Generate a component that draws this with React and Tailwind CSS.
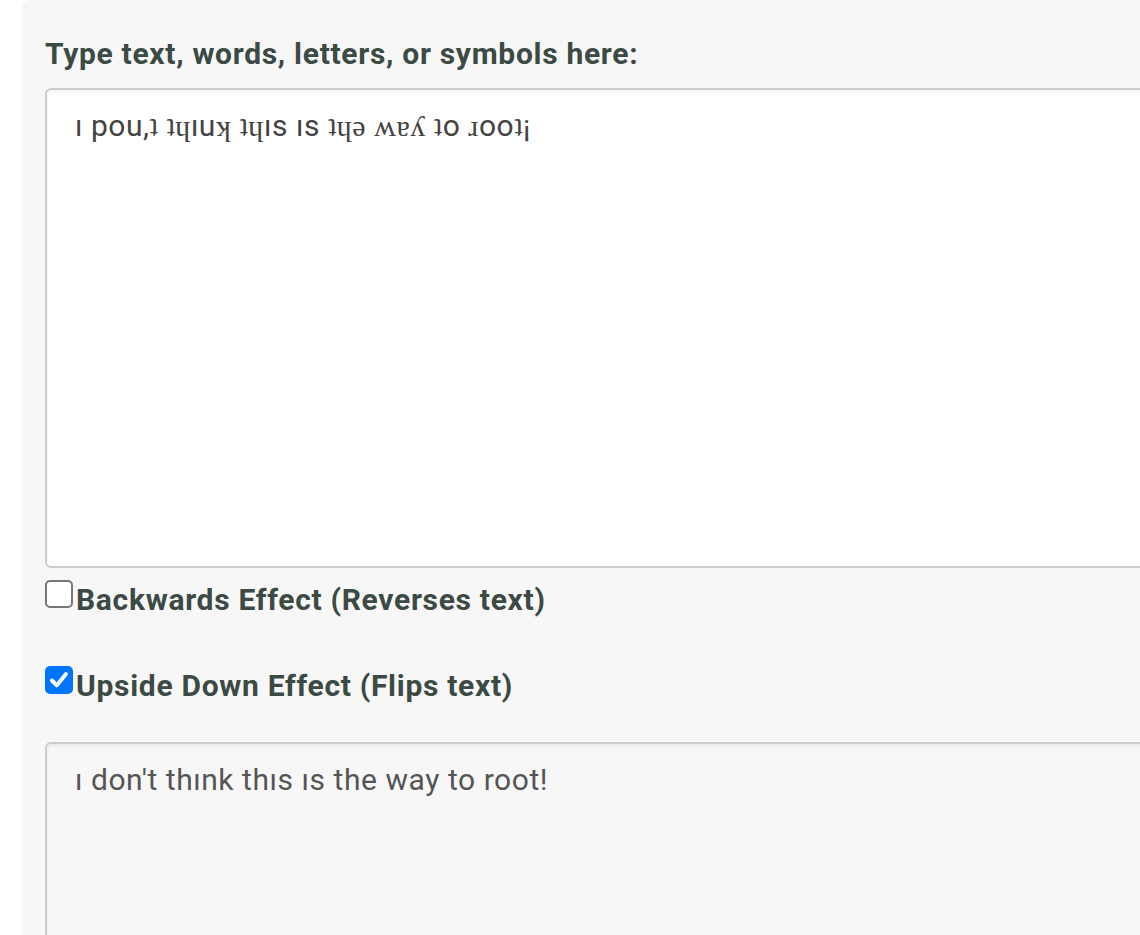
import React, { useState } from 'react';

const flip = {
  'ı': 'ı', p: 'd', o: 'o', u: 'n', ',': "'", 'ʇ': 't', 'ɥ': 'h', 'ʞ': 'k', s: 's',
  'ǝ': 'e', 'ʍ': 'w', 'ɐ': 'a', 'ʎ': 'y', 'ɹ': 'r', '¡': '!', ' ': ' ',
};

const Check = ({ checked, onChange, children }) => (
  <label className="flex items-start text-[30px] font-bold leading-[36px] tracking-[0.7px] text-[#3c4a44]">
    <input type="checkbox" checked={checked} onChange={e => onChange(e.target.checked)} className="sr-only" />
    <span
      className={`-mt-[2px] flex h-[28px] w-[28px] shrink-0 items-center justify-center rounded-[5px] border-2 ${
        checked ? 'border-[#0075ff] bg-[#0075ff]' : 'border-[#767676] bg-white'
      }`}
    >
      {checked && (
        <svg width="22" height="22" viewBox="0 0 22 22" fill="none">
          <path d="M4 11.5 L8.8 16.3 L18 5" stroke="#fff" strokeWidth="4" strokeLinecap="round" strokeLinejoin="round" />
        </svg>
      )}
    </span>
    <span className="ml-[3px]">{children}</span>
  </label>
);

const App = () => {
  const [input, setInput] = useState('ı pou,ʇ ʇɥıuʞ ʇɥıs ıs ʇɥǝ ʍɐʎ ʇo ɹooʇ¡');
  const [backwards, setBackwards] = useState(false);
  const [upside, setUpside] = useState(true);

  let output = upside ? input.split('').map(c => flip[c] ?? c).join('') : input;
  if (backwards) output = output.split('').reverse().join('');

  return (
    <div className="h-[935px] overflow-hidden bg-white pl-[22px]" style={{ fontFamily: 'Roboto, "Liberation Sans", sans-serif' }}>
      <div className="h-full rounded-tl-lg bg-[#f7f7f7] pl-[23px] pt-[36px]">
        <label className="block text-[30px] font-bold leading-[36px] tracking-[0.7px] text-[#3c4a44]">
          Type text, words, letters, or symbols here:
        </label>
        <textarea
          value={input}
          onChange={e => setInput(e.target.value)}
          className="mt-[16px] block h-[480px] w-[1200px] resize-none rounded-md border-2 border-[#cccccc] bg-white px-[28px] pt-[18px] text-[30px] leading-[36px] tracking-[0.55px] text-[#444] shadow-[inset_0_2px_4px_rgba(0,0,0,0.06)] outline-none"
          style={{ fontFamily: 'Roboto, "Liberation Serif", serif' }}
        />
        <div className="mt-[14px]">
          <Check checked={backwards} onChange={setBackwards}>Backwards Effect (Reverses text)</Check>
        </div>
        <div className="mt-[50px]">
          <Check checked={upside} onChange={setUpside}>Upside Down Effect (Flips text)</Check>
        </div>
        <textarea
          readOnly
          value={output}
          className="mt-[38px] block h-[300px] w-[1200px] resize-none rounded-md border-2 border-[#cccccc] bg-[#f7f7f7] px-[28px] pt-[18px] text-[30px] leading-[36px] tracking-[0.55px] text-[#555] shadow-[inset_0_2px_4px_rgba(0,0,0,0.06)] outline-none"
        />
      </div>
    </div>
  );
};

export default App;
